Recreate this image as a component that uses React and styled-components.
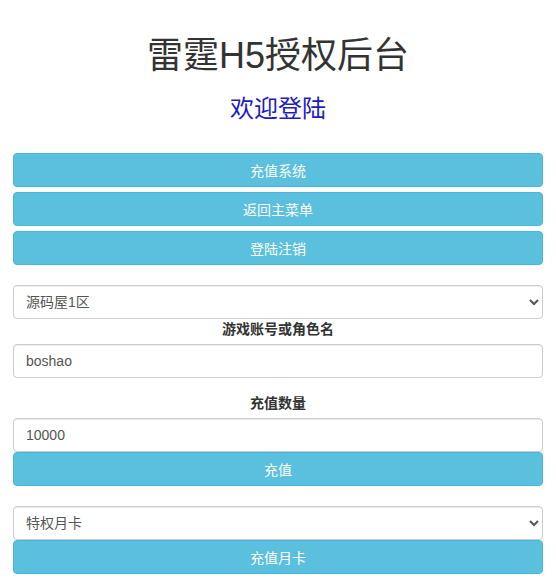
import React, { useState } from 'react'
import styled, { createGlobalStyle } from 'styled-components'

const GlobalStyle = createGlobalStyle`
  body {
    margin: 0;
    background: #fff;
    font-family: "Liberation Sans", "Noto Sans CJK SC", sans-serif;
    color: #333;
  }
  * { box-sizing: border-box; }
`;

const Page = styled.div`
  display: flex;
  flex-direction: column;
  padding: 36px 13px 0;
`;

const Title = styled.h1`
  margin: 0;
  font-size: 36px;
  line-height: 40px;
  font-weight: 400;
  text-align: center;
  color: #333;
`;

const Subtitle = styled.h2`
  margin: 19px 0 30px;
  font-size: 24px;
  line-height: 28px;
  font-weight: 400;
  text-align: center;
  color: #1c1cbf;
`;

const ButtonStack = styled.div`
  display: flex;
  flex-direction: column;
  gap: 5px;
`;

const Button = styled.button`
  display: block;
  width: 100%;
  height: 34px;
  padding: 0 12px;
  border: 1px solid #46b8da;
  border-radius: 4px;
  background: #5bc0de;
  color: #fff;
  font-family: inherit;
  font-size: 14px;
  cursor: pointer;
`;

const Form = styled.form`
  display: flex;
  flex-direction: column;
  margin-top: ${props => props.$top}px;
`;

const Field = `
  display: block;
  width: 100%;
  height: 34px;
  border: 1px solid #ccc;
  border-radius: 4px;
  background: #fff;
  color: #555;
  font-family: inherit;
  font-size: 14px;
  box-shadow: inset 0 1px 1px rgba(0,0,0,.075);
`;

const Select = styled.select`
  ${Field}
  padding: 0 8px;
`;

const Input = styled.input`
  ${Field}
  padding: 0 12px;
`;

const Label = styled.label`
  display: block;
  margin: ${props => props.$top || 0}px 0 4px;
  font-size: 14px;
  line-height: 21px;
  font-weight: 700;
  text-align: center;
  color: #333;
`;

export default function App() {
  const [server, setServer] = useState('1')
  const [account, setAccount] = useState('boshao')
  const [amount, setAmount] = useState('10000')
  const [card, setCard] = useState('month')

  return (
    <Page>
      <GlobalStyle />
      <Title>雷霆H5授权后台</Title>
      <Subtitle>欢迎登陆</Subtitle>
      <ButtonStack>
        <Button type="button">充值系统</Button>
        <Button type="button">返回主菜单</Button>
        <Button type="button">登陆注销</Button>
      </ButtonStack>

      <Form $top={20} onSubmit={e => e.preventDefault()}>
        <Select value={server} onChange={e => setServer(e.target.value)}>
          <option value="1">源码屋1区</option>
        </Select>
        <Label htmlFor="account">游戏账号或角色名</Label>
        <Input id="account" type="text" value={account} onChange={e => setAccount(e.target.value)} />
        <Label htmlFor="amount" $top={15}>充值数量</Label>
        <Input id="amount" type="text" value={amount} onChange={e => setAmount(e.target.value)} />
        <Button type="submit">充值</Button>
      </Form>

      <Form $top={20} onSubmit={e => e.preventDefault()}>
        <Select value={card} onChange={e => setCard(e.target.value)}>
          <option value="month">特权月卡</option>
        </Select>
        <Button type="submit">充值月卡</Button>
      </Form>
    </Page>
  )
}
